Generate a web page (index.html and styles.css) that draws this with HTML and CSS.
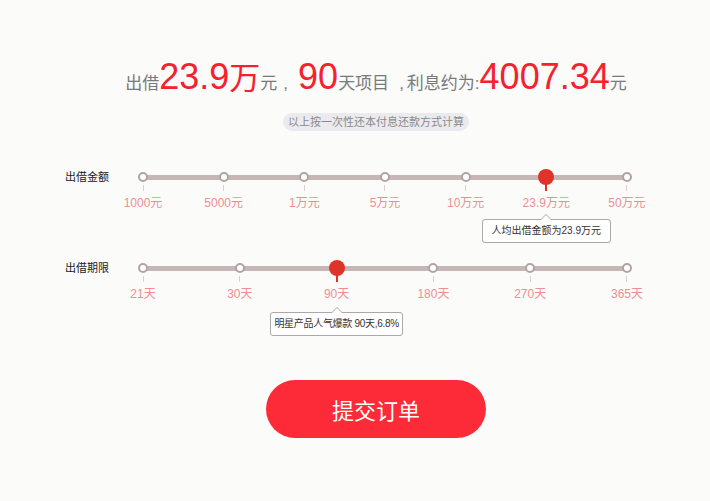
FILE: index.html
```html
<!DOCTYPE html>
<html lang="zh-CN">
<head>
<meta charset="utf-8">
<link rel="stylesheet" href="styles.css">
</head>
<body>
<div class="page">
  <div class="summary">
    <h1 class="headline"><span>出借</span><em>23.9<span class="unit">万</span></em><span>元</span><span class="sep sep-a">,</span><em>90</em><span>天项目</span><span class="sep sep-b">,</span><span>利息约为:</span><em>4007.34</em><span>元</span></h1>
    <p class="note">以上按一次性还本付息还款方式计算</p>
  </div>

  <div class="slider slider-amount">
    <div class="slider-label">出借金额</div>
    <div class="track">
      <div class="stop"><span class="knob"><i class="dot"></i></span><span class="stem"></span><span class="val">1000元</span></div>
      <div class="stop"><span class="knob"><i class="dot"></i></span><span class="stem"></span><span class="val">5000元</span></div>
      <div class="stop"><span class="knob"><i class="dot"></i></span><span class="stem"></span><span class="val">1万元</span></div>
      <div class="stop"><span class="knob"><i class="dot"></i></span><span class="stem"></span><span class="val">5万元</span></div>
      <div class="stop"><span class="knob"><i class="dot"></i></span><span class="stem"></span><span class="val">10万元</span></div>
      <div class="stop active"><span class="knob"><i class="dot"></i></span><span class="stem"></span><span class="val">23.9万元</span><span class="tip">人均出借金额为23.9万元</span></div>
      <div class="stop"><span class="knob"><i class="dot"></i></span><span class="stem"></span><span class="val">50万元</span></div>
    </div>
  </div>

  <div class="slider slider-term">
    <div class="slider-label">出借期限</div>
    <div class="track">
      <div class="stop"><span class="knob"><i class="dot"></i></span><span class="stem"></span><span class="val">21天</span></div>
      <div class="stop"><span class="knob"><i class="dot"></i></span><span class="stem"></span><span class="val">30天</span></div>
      <div class="stop active"><span class="knob"><i class="dot"></i></span><span class="stem"></span><span class="val">90天</span><span class="tip">明星产品人气爆款 90天,6.8%</span></div>
      <div class="stop"><span class="knob"><i class="dot"></i></span><span class="stem"></span><span class="val">180天</span></div>
      <div class="stop"><span class="knob"><i class="dot"></i></span><span class="stem"></span><span class="val">270天</span></div>
      <div class="stop"><span class="knob"><i class="dot"></i></span><span class="stem"></span><span class="val">365天</span></div>
    </div>
  </div>

  <div class="actions">
    <button class="submit" type="button">提交订单</button>
  </div>
</div>
</body>
</html>
```

FILE: styles.css
```css
html, body {
  margin: 0;
  padding: 0;
}
body {
  background: #fbfbfa;
  font-family: "Liberation Sans", Arial, "Noto Sans CJK SC", sans-serif;
  color: #333;
  width: 710px;
  height: 501px;
  overflow: hidden;
}
.page {
  padding-top: 57px;
}
.summary {
  padding-left: 42px;
  display: flex;
  flex-direction: column;
  align-items: center;
}
.headline {
  margin: 0;
  font-weight: normal;
  font-size: 17px;
  line-height: 40px;
  color: #7a7a7a;
  white-space: nowrap;
  letter-spacing: 0;
}
.headline em {
  font-style: normal;
  font-size: 36px;
  color: #f5222d;
}
.headline .unit {
  font-size: 31px;
}
.sep {
  display: inline-block;
}
.sep-a {
  margin: 0 10px 0 6px;
}
.sep-b {
  margin: 0 3px 0 10px;
}
.note {
  margin: 9px 0 0;
  height: 18px;
  line-height: 18px;
  padding: 0 5px;
  border-radius: 9px;
  background: #ebeaee;
  color: #8a8a8a;
  font-size: 11px;
}

.slider {
  display: flex;
  align-items: flex-start;
  padding-left: 65px;
}
.slider-amount {
  margin-top: 38px;
}
.slider-term {
  margin-top: 17px;
}
.slider-label {
  width: 78px;
  height: 16px;
  line-height: 16px;
  font-size: 11px;
  color: #222;
}
.track {
  position: relative;
  width: 484px;
  display: flex;
  justify-content: space-between;
  align-items: flex-start;
}
.track::before {
  content: "";
  position: absolute;
  left: 0;
  right: 0;
  top: 6px;
  height: 5px;
  background: #c6b6b6;
}
.stop {
  position: relative;
  width: 0;
  display: flex;
  flex-direction: column;
  align-items: center;
}
.knob {
  height: 16px;
  width: 16px;
  display: flex;
  align-items: center;
  justify-content: center;
}
.dot {
  box-sizing: border-box;
  width: 10px;
  height: 10px;
  border-radius: 50%;
  border: 2px solid #b2a3a3;
  background: #fff;
}
.stem {
  width: 1px;
  height: 6px;
  background: #d9d0d0;
}
.val {
  margin-top: 5px;
  font-size: 12px;
  line-height: 14px;
  color: #ef8e91;
  white-space: nowrap;
}
.active .dot {
  width: 16px;
  height: 16px;
  border: 0;
  background: #df3228;
}
.active .stem {
  width: 2px;
  margin-top: -1px;
  height: 7px;
  background: #df3228;
}
.tip {
  position: relative;
  margin-top: 9px;
  box-sizing: border-box;
  height: 24px;
  line-height: 22px;
  border: 1px solid #a9a9a9;
  border-radius: 3px;
  background: #fff;
  font-size: 10px;
  color: #333;
  white-space: nowrap;
  text-align: center;
}
.tip::before,
.tip::after {
  content: "";
  position: absolute;
  left: 50%;
  width: 0;
  height: 0;
  border: 6px solid transparent;
  border-top: 0;
}
.tip::before {
  top: -6px;
  margin-left: -6px;
  border-bottom-color: #a9a9a9;
}
.tip::after {
  top: -5px;
  margin-left: -6px;
  border-bottom-color: #fff;
}
.slider-amount .tip {
  width: 129px;
}
.slider-term .tip {
  padding: 0 3px;
  letter-spacing: -0.3px;
  margin-top: 11px;
}

.actions {
  padding-left: 42px;
  margin-top: 44px;
  display: flex;
  justify-content: center;
}
.submit {
  width: 220px;
  height: 58px;
  border: 0;
  border-radius: 29px;
  background: #fd2b37;
  color: #fff;
  font-family: "Noto Sans CJK SC", sans-serif;
  font-size: 22px;
  cursor: pointer;
}
```
